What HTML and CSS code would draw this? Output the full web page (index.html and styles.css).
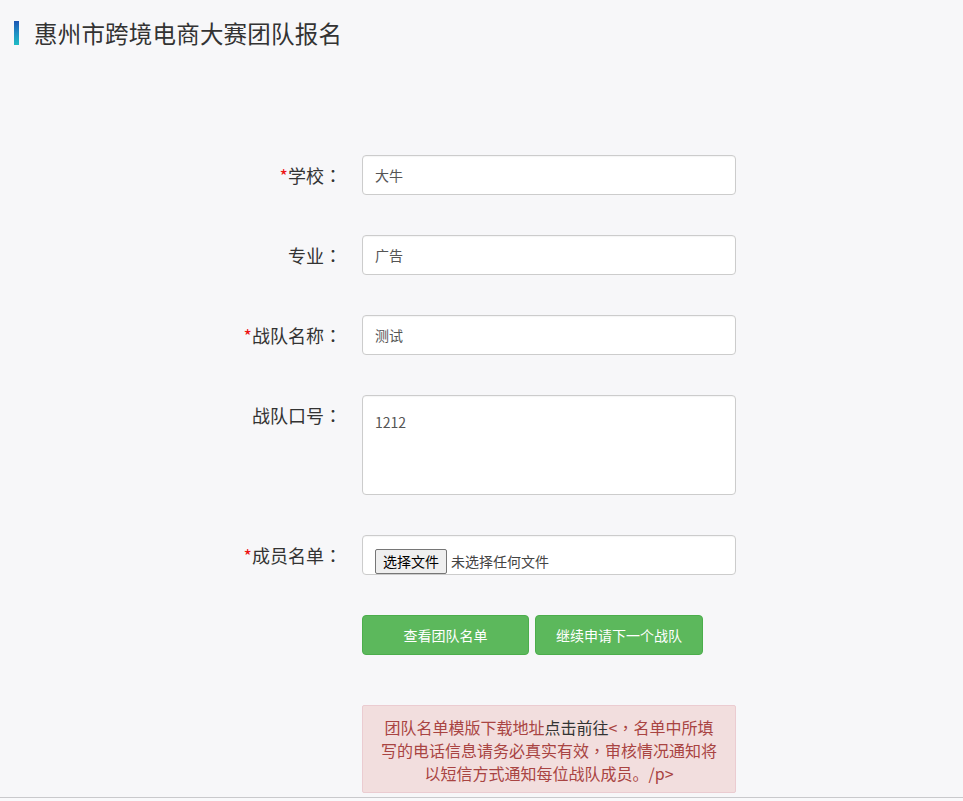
FILE: index.html
```html
<!DOCTYPE html>
<html lang="zh-CN">
<head>
<meta charset="utf-8">
<title>惠州市跨境电商大赛团队报名</title>
<link rel="stylesheet" href="styles.css">
</head>
<body>
<div class="page">
  <header class="header">
    <span class="accent"></span>
    <h1 class="title">惠州市跨境电商大赛团队报名</h1>
  </header>
  <form class="form">
    <div class="row">
      <label class="label"><span class="req">*</span>学校<span class="punct" lang="zh-TW">：</span></label>
      <input class="control" type="text" value="大牛">
    </div>
    <div class="row">
      <label class="label">专业<span class="punct" lang="zh-TW">：</span></label>
      <input class="control" type="text" value="广告">
    </div>
    <div class="row">
      <label class="label"><span class="req">*</span>战队名称<span class="punct" lang="zh-TW">：</span></label>
      <input class="control" type="text" value="测试">
    </div>
    <div class="row">
      <label class="label">战队口号<span class="punct" lang="zh-TW">：</span></label>
      <textarea class="control area">1212</textarea>
    </div>
    <div class="row">
      <label class="label"><span class="req">*</span>成员名单<span class="punct" lang="zh-TW">：</span></label>
      <div class="control file">
        <span class="file-btn">选择文件</span><span class="file-name">未选择任何文件</span>
      </div>
    </div>
    <div class="row actions">
      <span class="label"></span>
      <div class="btns">
        <button type="button" class="btn btn-a">查看团队名单</button>
        <button type="button" class="btn btn-b">继续申请下一个战队</button>
      </div>
    </div>
    <div class="row notice-row">
      <span class="label"></span>
      <p class="alert">团队名单模版下载地址<a class="alert-link" href="#">点击前往</a>&lt;<span class="punct" lang="zh-TW">，</span>名单中所填写的电话信息请务必真实有效<span class="punct" lang="zh-TW">，</span>审核情况通知将以短信方式通知每位战队成员。/p&gt;</p>
    </div>
  </form>
</div>
</body>
</html>
```
FILE: styles.css
```css
html, body {
  margin: 0;
  padding: 0;
}
body {
  background: #f9f9fb;
  font-family: "Noto Sans CJK SC", "Open Sans", sans-serif;
  color: #333;
  height: 801px;
  overflow: hidden;
}
.page {
  background: #f7f7f9;
  border-bottom: 1px solid #c9c9cc;
  box-sizing: border-box;
  height: 798px;
}
.header {
  display: flex;
  align-items: center;
  padding: 21px 0 0 14px;
  height: 24px;
}
.accent {
  width: 5px;
  height: 24px;
  background: linear-gradient(180deg, #1c55b3 0%, #1f8fc4 50%, #1fbcc4 100%);
  margin-right: 15px;
}
.title {
  margin: 0;
  font-size: 23.5px;
  font-weight: normal;
  line-height: 24px;
  color: #333;
  letter-spacing: 0.2px;
}
.form {
  margin-top: 110px;
  display: flex;
  flex-direction: column;
  gap: 40px;
}
.row {
  display: flex;
  align-items: flex-start;
}
.label {
  flex: 0 0 auto;
  width: 362px;
  padding-right: 20px;
  box-sizing: border-box;
  text-align: right;
  font-size: 18px;
  line-height: 40px;
  color: #333;
}
.punct {
  font-family: "Noto Sans CJK TC", "Noto Sans CJK SC", sans-serif;
}
.req {
  color: #e11;
}
.control {
  width: 374px;
  height: 40px;
  box-sizing: border-box;
  border: 1px solid #ccc;
  border-radius: 4px;
  background: #fff;
  padding: 0 12px;
  font-family: "Noto Sans CJK SC", "Open Sans", sans-serif;
  font-size: 14px;
  color: #555;
  margin: 0;
  outline: none;
  box-shadow: inset 0 1px 1px rgba(0,0,0,0.04);
}
.area {
  height: 100px;
  padding: 15px 12px;
  line-height: 22px;
  resize: none;
  display: block;
}
.file {
  display: flex;
  align-items: flex-start;
  padding-top: 13px;
  overflow: hidden;
}
.file-btn {
  display: inline-block;
  height: 25px;
  line-height: 23px;
  padding: 0 7px;
  box-sizing: border-box;
  border: 1px solid #767676;
  border-radius: 2px;
  background: #efefef;
  color: #000;
  font-size: 14px;
  margin-right: 4px;
}
.file-name {
  line-height: 25px;
  font-size: 14px;
  color: #444;
}
.btns {
  display: flex;
  gap: 6px;
}
.btn {
  height: 40px;
  border: 1px solid #4cae4c;
  border-radius: 4px;
  background: #5cb85c;
  color: #fff;
  font-family: "Noto Sans CJK SC", "Open Sans", sans-serif;
  font-size: 14px;
  padding: 0;
  cursor: pointer;
}
.btn-a { width: 167px; }
.btn-b { width: 168px; }
.notice-row {
  margin-top: 10px;
}
.alert {
  margin: 0;
  width: 374px;
  box-sizing: border-box;
  padding: 10px 16px 7px;
  background: #f2dede;
  border: 1px solid #ebccd1;
  border-radius: 2px;
  color: #a94442;
  font-size: 16px;
  line-height: 23px;
  text-align: center;
}
.alert-link {
  color: #333;
  text-decoration: none;
}
```
